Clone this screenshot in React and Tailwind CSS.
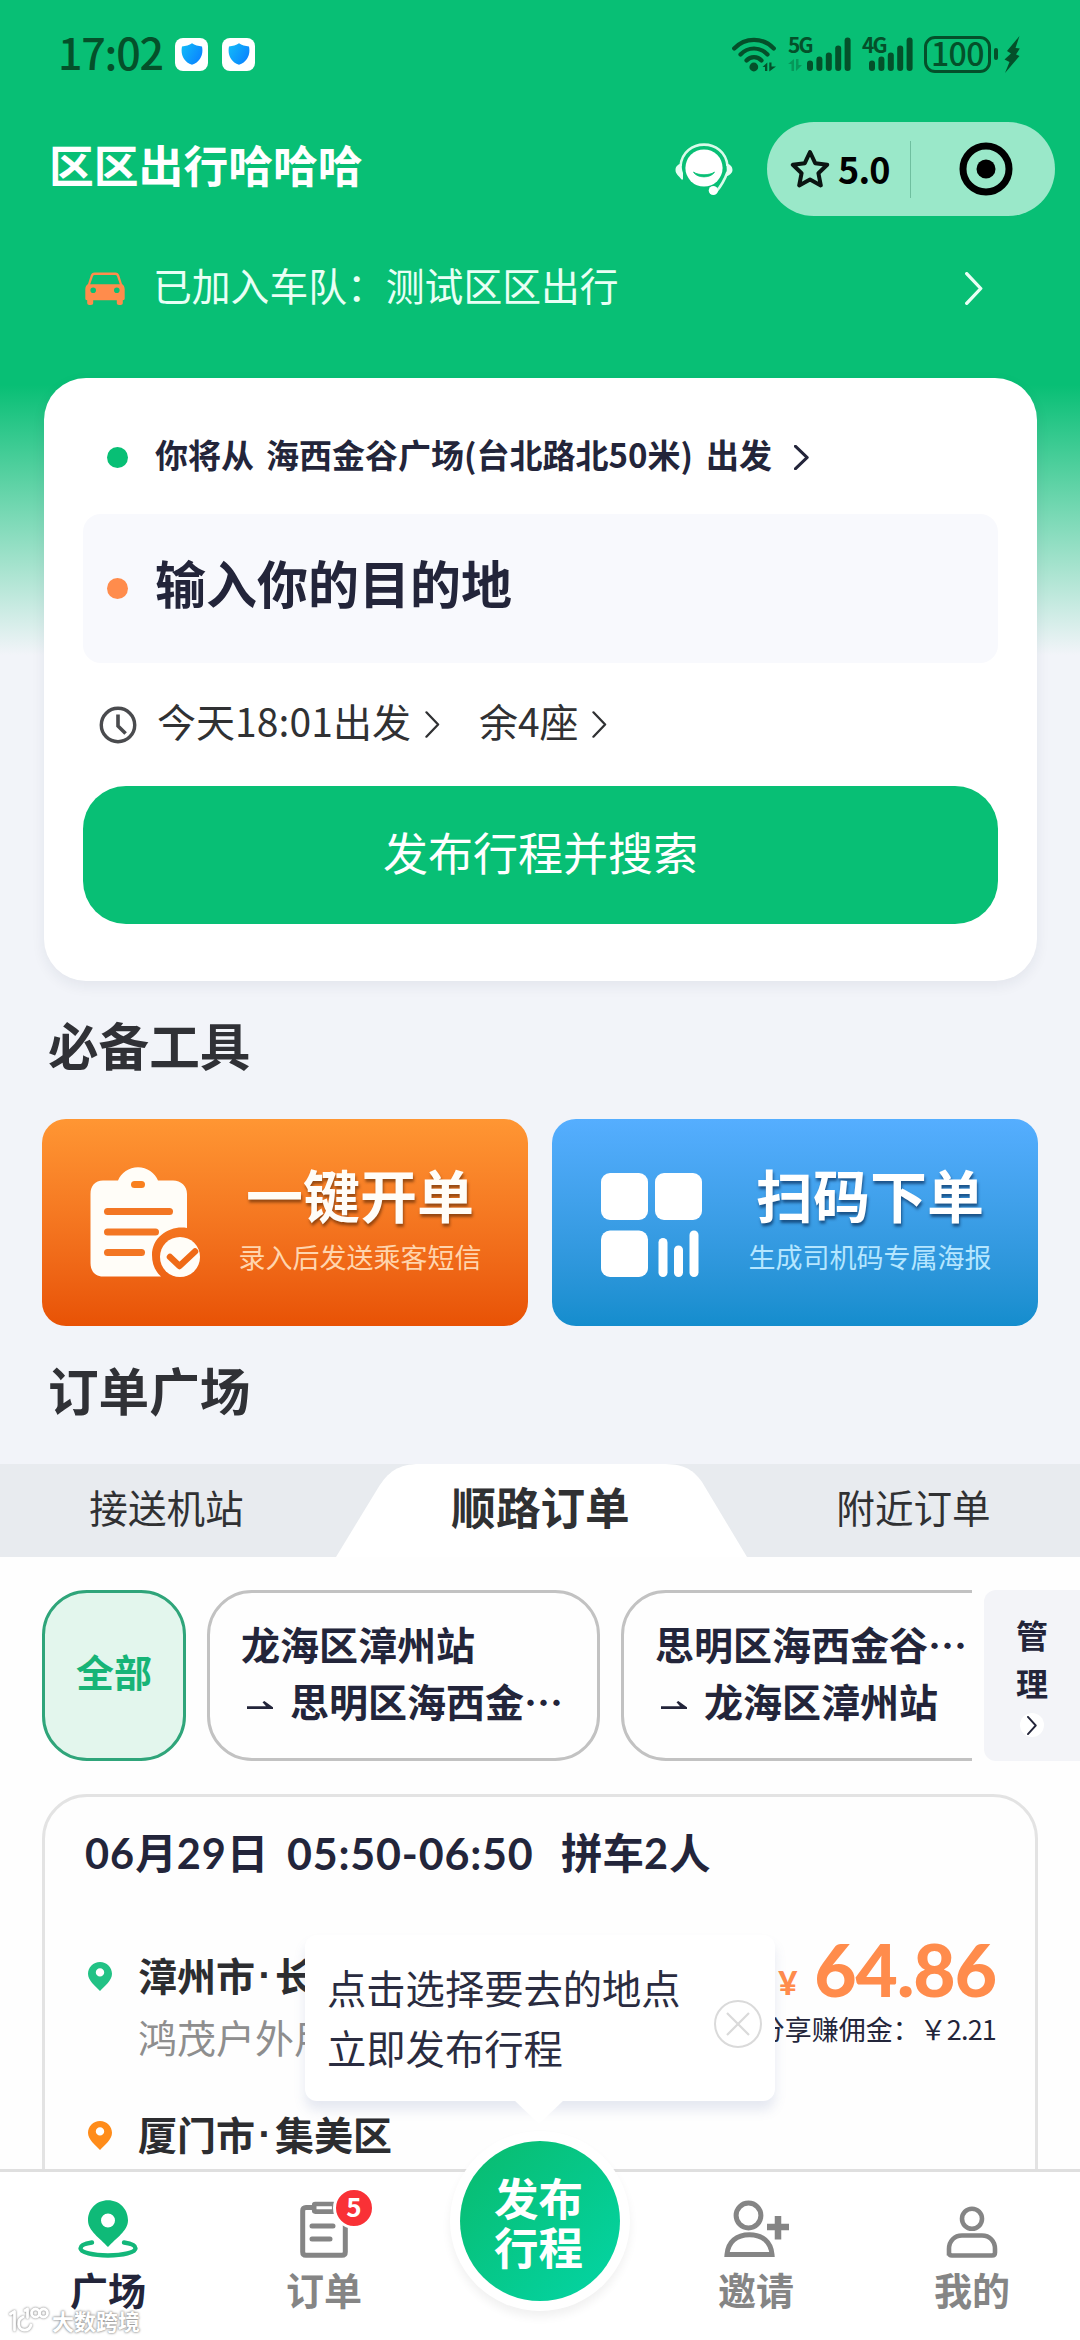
import React from "react";

const Chevron = ({ className, strokeWidth = 3 }) => (
  <svg viewBox="0 0 16 30" fill="none" preserveAspectRatio="none" className={className}>
    <path
      d="M1.5 1.5 L14 15 L1.5 28.5"
      stroke="currentColor"
      strokeWidth={strokeWidth}
      strokeLinecap="round"
      strokeLinejoin="round"
    />
  </svg>
);

const ShieldBadge = () => (
  <div className="flex h-[33px] w-[33px] items-center justify-center rounded-[8px] bg-white">
    <svg viewBox="0 0 22 22" className="h-[22px] w-[22px]">
      <defs>
        <linearGradient id="shield" x1="0" y1="0" x2="1" y2="0.6">
          <stop offset="0" stopColor="#12bdf8" />
          <stop offset="1" stopColor="#0a84ff" />
        </linearGradient>
      </defs>
      <path
        d="M11 0.3 C13.5 2 17.5 3.2 21 3.6 C22.6 11 19.6 18.6 11 21.8 C2.4 18.6 -0.6 11 1 3.6 C4.5 3.2 8.5 2 11 0.3 Z"
        fill="url(#shield)"
      />
    </svg>
  </div>
);

const WifiIcon = () => (
  <svg viewBox="0 0 44 35" fill="none" className="h-[35px] w-[44px]">
    <g stroke="#04502a" strokeWidth="4.2" strokeLinecap="round">
      <path d="M2.2 11.5 C13 0 31 0 41.8 11.5" />
      <path d="M8.5 17.5 C16 9.5 28 9.5 35.5 17.5" />
      <path d="M14.5 23.5 C18.5 19 25.5 19 29.5 23.5" />
    </g>
    <circle cx="21.8" cy="30" r="4.4" fill="#04502a" />
    <path d="M30.5 30 L35.3 25.5 V34 H33 V30 Z M37.3 25.5 H39.5 V29.5 H44 L37.3 34.5 Z" fill="#04502a" />
  </svg>
);

const SignalBars = ({ className }) => (
  <svg viewBox="0 0 44 34" className={className}>
    <g fill="#04502a">
      <rect x="0" y="23.5" width="6" height="10.5" rx="3" />
      <rect x="9.4" y="19.5" width="6" height="14.5" rx="3" />
      <rect x="18.8" y="15.5" width="6" height="18.5" rx="3" />
      <rect x="28.2" y="8.5" width="6" height="25.5" rx="3" />
      <rect x="37.6" y="0.5" width="6" height="33.5" rx="3" />
    </g>
  </svg>
);

const StatusBar = () => (
  <div className="flex h-[108px] items-center pl-[58px] pr-[60px] text-[#04502a]">
    <div className="w-[117px] pb-[5px] text-[43px] leading-none font-medium tracking-[-1.2px]">17:02</div>
    <div className="flex gap-[14px]">
      <ShieldBadge />
      <ShieldBadge />
    </div>
    <div className="ml-auto flex items-center">
      <WifiIcon />
      <div className="ml-[12px] flex h-[35px] w-[63px] items-start">
        <div className="w-[19px]">
          <div className="w-[26px] text-[21px] leading-[15px] font-bold tracking-[-1.8px]">5G</div>
          <svg viewBox="0 0 14 12" className="mt-[7px] h-[12px] w-[14px] opacity-35">
            <path d="M0 5 L6 0 V12 H3.5 V5 Z M8 0 H10.5 V6 H14 L8 12 Z" fill="#04502a" />
          </svg>
        </div>
        <SignalBars className="h-[34px] w-[44px]" />
      </div>
      <div className="ml-[11px] flex h-[35px] w-[51px] items-start">
        <div className="w-[7px]">
          <div className="w-[26px] text-[21px] leading-[15px] font-bold tracking-[-1.8px]">4G</div>
        </div>
        <SignalBars className="h-[34px] w-[44px]" />
      </div>
      <div className="ml-[11px] flex h-[37px] w-[67px] items-center justify-center rounded-[11px] border-[3px] border-[#04502a] pb-[5px] text-[32px] leading-none font-medium tracking-[-0.5px]">
        100
      </div>
      <div className="ml-[3px] h-[12px] w-[4px] rounded-[2px] bg-[#04502a]" />
      <svg viewBox="0 0 16 37" className="ml-[6px] h-[37px] w-[16px]">
        <path d="M15.5 0 L3 15 L7 17.5 L0.5 23.5 L5.5 26 L1 37 L15.5 20 L12 18.5 L15.8 12.5 L11.5 12 Z" fill="#04502a" />
      </svg>
    </div>
  </div>
);

const ServiceIcon = () => (
  <svg viewBox="0 0 58 54" fill="none" className="h-[54px] w-[58px]">
    <circle cx="29" cy="26" r="18.6" fill="#fff" />
    <path d="M18.5 30 C22 36.5 36 36.5 39.5 30 C35 33.6 23 33.6 18.5 30 Z" fill="#08bf75" stroke="#08bf75" strokeWidth="0.8" strokeLinejoin="round" />
    <path d="M5.5 24 C8 -4.5 50 -4.5 52.5 24 M52.5 30 C50 37 47 43 41 50" stroke="#d9fbea" strokeWidth="2.6" />
    <path d="M7 21.5 C3 22 0.5 24.5 0.5 28 C0.5 32 4 34 6.5 37.5 H8 V31 C6.8 28 6.5 24 7 21.5 Z" fill="#e6fdf3" />
    <path d="M51 21.5 C55 22 57.5 24.5 57.5 28 C57.5 31 54.5 33.5 51 34.5 C52 30 52 25 51 21.5 Z" fill="#e6fdf3" />
    <circle cx="38.3" cy="48.5" r="4.6" fill="#fff" />
  </svg>
);

const TitleBar = () => (
  <div className="mt-[14px] flex h-[94px] items-center pl-[49px] pr-[25px]">
    <h1 className="pb-[9px] text-[44.8px] leading-none font-bold text-white">区区出行哈哈哈</h1>
    <div className="mr-[34px] ml-auto pb-[1px]">
      <ServiceIcon />
    </div>
    <div className="flex h-[94px] w-[288px] items-center rounded-full bg-[#9ae8c9] pl-[23px] text-black">
      <svg viewBox="0 0 40 40" fill="none" className="h-[40px] w-[40px]">
        <path
          d="M20 3 L25.2 14.2 L37.2 15.8 L28.4 24.2 L30.8 36.4 L20 30.6 L9.2 36.4 L11.6 24.2 L2.8 15.8 L14.8 14.2 Z"
          stroke="#0b1512"
          strokeWidth="4"
          strokeLinejoin="round"
        />
      </svg>
      <span className="ml-[8px] w-[64px] pb-[2px] text-[36px] leading-none font-bold tracking-[-0.8px]">5.0</span>
      <div className="ml-[8px] h-[57px] w-px bg-[#6fbf9f]" />
      <svg viewBox="0 0 54 54" className="ml-[48px] h-[54px] w-[54px]">
        <circle cx="27" cy="27" r="23" fill="none" stroke="#000" strokeWidth="7" />
        <circle cx="27" cy="27" r="9.5" fill="#000" />
      </svg>
    </div>
  </div>
);

const TeamRow = () => (
  <div className="flex h-[144px] items-center pr-[97px] pl-[85px] text-[#e9fff5]">
    <svg viewBox="0 0 40 33" className="h-[33px] w-[40px]">
      <path
        fillRule="evenodd"
        clipRule="evenodd"
        fill="#ff8c4c"
        d="M9.5 0.5 H30.5 C32.5 0.5 33.6 1.5 34.3 3.4 L37 12 C38.8 13.2 39.7 15 39.7 17.3 V26.5 C39.7 27.6 39 28.2 37.8 28.2 V31 C37.8 32.2 37 33 35.6 33 H34 C32.6 33 31.8 32.2 31.8 31 V28.2 H8.2 V31 C8.2 32.2 7.4 33 6 33 H4.4 C3 33 2.2 32.2 2.2 31 V28.2 C1 28.2 0.3 27.6 0.3 26.5 V17.3 C0.3 15 1.2 13.2 3 12 L5.7 3.4 C6.4 1.5 7.5 0.5 9.5 0.5 Z M9.6 3 C8.8 3 8.3 3.4 8 4.2 L5.2 12.3 H34.8 L32 4.2 C31.7 3.4 31.2 3 30.4 3 Z M8.2 15.4 A2.8 2.8 0 1 0 8.2 21 A2.8 2.8 0 1 0 8.2 15.4 Z M31.8 15.4 A2.8 2.8 0 1 0 31.8 21 A2.8 2.8 0 1 0 31.8 15.4 Z"
      />
    </svg>
    <span className="ml-[28px] pb-[8px] text-[38.8px] leading-none">已加入车队：测试区区出行</span>
    <Chevron className="ml-auto h-[33px] w-[18px]" />
  </div>
);

const TripCard = () => (
  <div className="mx-[44px] mt-[18px] h-[603px] w-[993px] rounded-[42px] bg-white px-[39px] pt-[32px] shadow-[0_5px_14px_rgba(30,40,70,0.07)]">
    <div className="mb-[10px] flex h-[94px] items-center pl-[24px] text-[#23253a]">
      <div className="h-[21px] w-[21px] rounded-full bg-[#08bf75]" />
      <span className="ml-[27px] pb-[6px] text-[33px] leading-none font-bold">
        你将从<span className="inline-block w-[12px]" />
        海西金谷广场(台北路北50米)
        <span className="inline-block w-[13px]" />
        出发
      </span>
      <Chevron className="ml-[22px] h-[25px] w-[15px]" strokeWidth={3.4} />
    </div>
    <div className="flex h-[149px] items-center rounded-[18px] bg-[#f8f9fd] pl-[24px]">
      <div className="h-[21px] w-[21px] rounded-full bg-[#ff8c4c]" />
      <span className="ml-[27px] pb-[12px] text-[51px] leading-none font-bold text-[#23253a]">输入你的目的地</span>
    </div>
    <div className="flex h-[123px] items-center pl-[16px] text-[#303133]">
      <svg viewBox="0 0 40 40" fill="none" className="h-[40px] w-[38px]">
        <circle cx="20" cy="20" r="17.6" stroke="#4a4b4e" strokeWidth="3.6" />
        <path d="M20 9 V21 L28 29" stroke="#4a4b4e" strokeWidth="3.8" />
      </svg>
      <span className="ml-[20px] pb-[9px] text-[39px] leading-none">
        今天<span className="tracking-[0.1px]">18:01</span>出发
      </span>
      <Chevron className="ml-[14px] h-[27px] w-[15px]" strokeWidth={2.4} />
      <span className="ml-[39px] pb-[9px] text-[39px] leading-none">余4座</span>
      <Chevron className="ml-[13px] h-[27px] w-[15px]" strokeWidth={2.4} />
    </div>
    <button className="flex h-[138px] w-full items-center justify-center rounded-[43px] bg-[#08bf75] pb-[7px] text-[45px] leading-none text-white">
      发布行程并搜索
    </button>
  </div>
);

const SectionTitle = ({ children }) => (
  <h2 className="flex h-[138px] items-center pb-[11px] pl-[48px] text-[50.6px] leading-none font-bold text-[#303136]">
    {children}
  </h2>
);

const ClipboardIcon = () => (
  <svg viewBox="0 0 110 110" className="h-[110px] w-[110px]">
    <path
      fill="#fffdf8"
      d="M13 13.5 H28 C31 6 39 0.3 48 0.3 C57 0.3 65 6 68 13.5 H83 C91 13.5 97 19 97 27 V61 C81 58 62 69 62 88 C62 97 65 104 71 109.5 H13 C5 109.5 0.5 104 0.5 96 V27 C0.5 19 5 13.5 13 13.5 Z"
    />
    <rect x="41" y="14" width="14" height="7" rx="3.5" fill="#f9801f" />
    <g fill="#f37623">
      <rect x="14" y="41" width="69" height="7" rx="3.5" />
      <rect x="14" y="61.5" width="55" height="7" rx="3.5" />
      <rect x="14" y="82" width="41" height="7" rx="3.5" />
    </g>
    <circle cx="90" cy="90" r="20" fill="#fffdf8" />
    <path d="M80 90 L89.5 99 L105 84.5" fill="none" stroke="#ef6a17" strokeWidth="6.5" strokeLinecap="round" strokeLinejoin="round" />
  </svg>
);

const ScanIcon = () => (
  <svg viewBox="0 0 101 104" fill="#fff" className="h-[104px] w-[101px]">
    <rect x="0" y="0" width="47" height="47" rx="9" />
    <rect x="54" y="0" width="47" height="47" rx="9" />
    <rect x="0" y="57.5" width="47" height="46.5" rx="9" />
    <rect x="57.5" y="65" width="9" height="39" rx="4.5" />
    <rect x="73" y="72.5" width="9" height="31.5" rx="4.5" />
    <rect x="88.5" y="57.5" width="9" height="46.5" rx="4.5" />
  </svg>
);

const Tools = () => (
  <div className="flex h-[207px] gap-[24px] px-[42px]">
    <div className="flex w-[486px] rounded-[24px] bg-linear-to-b from-[#ff9633] to-[#e85205]">
      <div className="mt-[48px] ml-[48px]">
        <ClipboardIcon />
      </div>
      <div className="mt-[45px] ml-[38px] w-[244px] text-center">
        <div className="text-[57px] leading-[58px] font-bold text-[#fffdf8] [text-shadow:1px_3px_3px_rgba(70,30,0,0.55)]">一键开单</div>
        <div className="mt-[20px] text-[27px] leading-[30px] text-[#ffd5ae]">录入后发送乘客短信</div>
      </div>
    </div>
    <div className="flex w-[486px] rounded-[24px] bg-linear-to-b from-[#55aeff] to-[#148dcd]">
      <div className="mt-[54px] ml-[49px]">
        <ScanIcon />
      </div>
      <div className="mt-[45px] ml-[46px] w-[244px] text-center">
        <div className="text-[57px] leading-[58px] font-bold text-white [text-shadow:1px_3px_3px_rgba(0,30,70,0.6)]">扫码下单</div>
        <div className="mt-[20px] text-[27px] leading-[30px] text-[#b5e6ff]">生成司机码专属海报</div>
      </div>
    </div>
  </div>
);

const OrderTabs = () => (
  <div className="flex h-[93px] bg-[#e8ebef] text-[#303133]">
    <div className="flex w-[336px] items-center justify-center pr-[3px] pb-[8px] text-[38.6px] leading-none">接送机站</div>
    <div className="relative flex w-[411px] items-center justify-center pr-[2px] pb-[8px]">
      <svg viewBox="0 0 411 93" className="absolute inset-0 h-[93px] w-[411px]">
        <path d="M0 93 L42 24 C52 8 62 0 84 0 H326 C346 0 356 4 366 18 L411 93 Z" fill="#fff" />
      </svg>
      <span className="relative text-[44.6px] leading-none font-bold">顺路订单</span>
    </div>
    <div className="flex w-[333px] items-center justify-center pb-[8px] text-[38.6px] leading-none">附近订单</div>
  </div>
);

const Harpoon = () => (
  <svg viewBox="0 0 26 9" className="mt-[11px] h-[9px] w-[26px]">
    <path d="M0 5.3 H19 L15.5 1.2 L17.3 0 L26 6.2 V8 H0 Z" fill="#23253a" />
  </svg>
);

const RouteChip = ({ from, to }) => (
  <div className="h-[171px] w-[393px] shrink-0 rounded-[45px] border-[3px] border-[#c2c2c2] pt-[25px] pl-[31px] text-[39px] font-bold whitespace-nowrap text-[#23253a]">
    <div className="leading-[50px]">{from}</div>
    <div className="mt-[7px] flex items-center leading-[50px]">
      <div className="ml-[6px] w-[43px]">
        <Harpoon />
      </div>
      {to}
    </div>
  </div>
);

const RouteFilter = () => (
  <div className="flex justify-between pt-[33px] pl-[42px]">
    <div className="flex w-[930px] gap-[21px] overflow-hidden">
      <div className="flex h-[171px] w-[144px] shrink-0 items-center justify-center rounded-[45px] border-[3px] border-[#2fa57a] bg-[#e3f6ed] pb-[9px] text-[38px] leading-none font-bold text-[#17b477]">
        全部
      </div>
      <RouteChip from="龙海区漳州站" to="思明区海西金…" />
      <RouteChip from="思明区海西金谷…" to="龙海区漳州站" />
    </div>
    <div className="flex h-[171px] w-[96px] flex-col items-center rounded-l-[12px] bg-[#f3f4f8] pt-[20px] text-[32px] leading-[48px] font-bold text-[#23253a]">
      <span>管</span>
      <span>理</span>
      <div className="mt-[7px] flex h-[24px] w-[24px] items-center justify-center rounded-full bg-white">
        <Chevron className="h-[19px] w-[10px]" strokeWidth={3} />
      </div>
    </div>
  </div>
);

const PinIcon = ({ className }) => (
  <svg viewBox="0 0 24 29" className={className}>
    <path
      fillRule="evenodd"
      fill="currentColor"
      d="M12 0 C18.8 0 24 5.2 24 11.8 C24 18.8 17 23.5 12 29 C7 23.5 0 18.8 0 11.8 C0 5.2 5.2 0 12 0 Z M12 6.2 A4.2 4.2 0 1 0 12 14.6 A4.2 4.2 0 1 0 12 6.2 Z"
    />
  </svg>
);

const Place = ({ city, area }) => (
  <span className="flex text-[39px] leading-none font-bold whitespace-nowrap text-[#2c2d30]">
    {city}
    <span className="w-[20px] text-center font-['Liberation_Sans']">·</span>
    {area}
  </span>
);

const OrderCard = () => (
  <div className="mx-[42px] mt-[33px] h-[520px] rounded-[45px] border-[3px] border-[#e3e3e3] pr-[39px] pl-[40px]">
    <div className="flex h-[112px] items-center text-[41.5px] leading-none font-bold text-[#23253a]">
      <span className="w-[202px]">
        <span className="font-['Lato'] tracking-[1px]">06</span>月<span className="font-['Lato'] tracking-[1px]">29</span>日
      </span>
      <span className="w-[274px] font-['Lato'] text-[43px] tracking-[0.8px]">05:50-06:50</span>
      <span>
        拼车<span className="font-['Lato'] tracking-[1px]">2</span>人
      </span>
    </div>
    <div className="mt-[34px] flex justify-between">
      <div>
        <div className="flex h-[62px] items-center">
          <PinIcon className="mt-[5px] mr-[26px] ml-[3px] h-[29px] w-[24px] text-[#22c285]" />
          <Place city="漳州市" area="长" />
        </div>
        <div className="flex h-[62px] items-center pl-[53px] text-[39px] leading-none text-[#8e8e8e]">鸿茂户外用</div>
        <div className="mt-[35px] flex h-[62px] items-center">
          <PinIcon className="mt-[5px] mr-[26px] ml-[3px] h-[29px] w-[24px] text-[#ff8c1a]" />
          <Place city="厦门市" area="集美区" />
        </div>
      </div>
      <div className="text-right">
        <div className="h-[62px] font-['Lato'] leading-[52px] font-black text-[#ff8c4c]">
          <span className="relative top-[-2px] mr-[17px] text-[33px]">¥</span>
          <span className="text-[73px] tracking-[-1px]">64.86</span>
        </div>
        <div className="mt-[9px] text-[27px] leading-[30px] text-[#23253a]">
          分享赚佣金：￥<span className="tracking-[-0.8px]">2.21</span>
        </div>
      </div>
    </div>
  </div>
);

// Bubble over the publish button
const PublishTip = () => (
  <div className="absolute top-[1935px] left-[305px] h-[166px] w-[470px]">
    <div className="flex h-full items-center justify-between rounded-[12px] bg-white pr-[13px] pb-[3px] pl-[22px] shadow-[0_9px_12px_rgba(90,110,170,0.15)]">
      <div className="text-[39.3px] leading-[60px] text-[#2a2c40]">
        <div>点击选择要去的地点</div>
        <div>立即发布行程</div>
      </div>
      <svg viewBox="0 0 48 48" fill="none" className="mt-[15px] h-[48px] w-[48px]">
        <circle cx="24" cy="24" r="23" stroke="#dadada" strokeWidth="2" />
        <path d="M13 13 L35 35 M35 13 L13 35" stroke="#dadada" strokeWidth="2.2" />
      </svg>
    </div>
    <svg viewBox="0 0 50 24" className="absolute top-[165px] left-[209px] h-[24px] w-[50px]">
      <path d="M0 0 H50 L25 24 Z" fill="#fff" />
    </svg>
  </div>
);

const PlazaIcon = () => (
  <svg viewBox="0 0 60 58" fill="none" className="h-[58px] w-[60px]">
    <path d="M14 42.5 C7 43.5 2.5 45.5 2.5 48.3 C2.5 52.4 14.8 55.5 30 55.5 C45.2 55.5 57.5 52.4 57.5 48.3 C57.5 45.5 53 43.5 46 42.5" stroke="#13b77a" strokeWidth="4.4" strokeLinecap="round" />
    <path
      fillRule="evenodd"
      fill="#0fba78"
      d="M30 0.3 C41.4 0.3 50 9 50 20.2 C50 31 38 38 30 47 C22 38 10 31 10 20.2 C10 9 18.6 0.3 30 0.3 Z M30 13.5 A7 7 0 1 0 30 27.5 A7 7 0 1 0 30 13.5 Z"
    />
  </svg>
);

const OrdersIcon = () => (
  <svg viewBox="0 0 48 57" fill="none" stroke="#858585" className="h-[57px] w-[48px]">
    <path d="M12 6.5 H6 C3.8 6.5 2.7 7.6 2.7 9.8 V51 C2.7 53.2 3.8 54.3 6 54.3 H42 C44.2 54.3 45.3 53.2 45.3 51 V9.8 C45.3 7.6 44.2 6.5 42 6.5 H36" strokeWidth="5" />
    <rect x="14.2" y="3" width="20" height="7.6" rx="1" strokeWidth="4.6" />
    <path d="M12 25 H33 M12 38 H30" strokeWidth="5" strokeLinecap="round" />
  </svg>
);

const InviteIcon = () => (
  <svg viewBox="0 0 65 58" fill="none" stroke="#858585" className="h-[58px] w-[65px]">
    <circle cx="24.5" cy="15.5" r="12.4" strokeWidth="5" />
    <path d="M3 54.5 C4 42 12.5 34.8 25.5 34.8 C38.5 34.8 47 42 48 54.5 Z" strokeWidth="5" />
    <path d="M43 27 H65 M54 16 V39.5" strokeWidth="6.5" />
  </svg>
);

const MineIcon = () => (
  <svg viewBox="0 0 52 52" fill="none" stroke="#858585" className="h-[52px] w-[52px]">
    <circle cx="26" cy="12.8" r="10" strokeWidth="4.6" />
    <path d="M3 49.5 V43 C3 35 8.5 29.5 16 29.5 H36 C43.5 29.5 49 35 49 43 V46.5 C49 48.5 48 49.5 46 49.5 H6 C4 49.5 3 48.5 3 46.5" strokeWidth="4.6" />
  </svg>
);

const NavItem = ({ icon, label, active, badge }) => (
  <div className="flex w-[216px] flex-col items-center">
    <div className="relative flex h-[86px] items-end">
      {icon}
      {badge && (
        <div className="absolute top-[15px] left-[33px] flex h-[42px] w-[42px] items-center justify-center rounded-full border-[3px] border-white bg-[#f93136] pb-[4px] text-[26px] leading-none font-bold text-white">
          {badge}
        </div>
      )}
    </div>
    <span className={`mt-[12px] text-[38px] leading-[38px] font-bold ${active ? "text-[#23253a]" : "text-[#858585]"}`}>
      {label}
    </span>
  </div>
);

const BottomNav = () => (
  <div className="relative flex h-[171px] shrink-0 border-t-[3px] border-[#dfdfdf] bg-white">
    <NavItem icon={<PlazaIcon />} label="广场" active />
    <NavItem icon={<OrdersIcon />} label="订单" badge="5" />
    <div className="w-[216px]" />
    <NavItem icon={<InviteIcon />} label="邀请" />
    <NavItem icon={<MineIcon />} label="我的" />
    <button className="absolute top-[-41px] left-[450px] h-[180px] w-[180px] rounded-full bg-white p-[10px] shadow-[0_6px_10px_rgba(0,0,0,0.06)]">
      <div className="flex h-full w-full flex-col items-center justify-center rounded-full bg-linear-to-br from-[#0aba6c] to-[#04d6a6] pr-[3px] text-[44.5px] leading-[49px] font-bold text-white">
        <span>发布</span>
        <span>行程</span>
      </div>
    </button>
    <div className="absolute bottom-[7px] left-[9px] flex items-center text-[22px] leading-none font-bold text-white [text-shadow:0_0_2px_#888,0_0_3px_#999]">
      <svg viewBox="0 0 40 26" fill="none" className="mr-[3px] h-[26px] w-[40px] drop-shadow-[0_0_1px_#777]">
        <g stroke="#fff" strokeWidth="2.8" strokeLinecap="round" strokeLinejoin="round">
          <path d="M1.5 7 L5.5 4.5 V23" />
          <path d="M14 10 C7.5 12.5 8.5 22.5 15 23 C18.5 23.3 21 21.5 22 18" />
          <path d="M16 3.5 L18.5 2 V10.5" />
          <circle cx="26.5" cy="6" r="4" />
          <circle cx="34.5" cy="6" r="4" />
        </g>
      </svg>
      大数跨境
    </div>
  </div>
);

const App = () => (
  <div
    lang="zh-CN"
    className="relative flex h-[2340px] w-[1080px] flex-col overflow-hidden bg-[linear-gradient(to_bottom,#08bf75_0px,#08bf75_385px,#f2f4f9_655px)] font-['Noto_Sans_CJK_SC',sans-serif]"
  >
    <div className="min-h-0 flex-1 overflow-hidden">
      <StatusBar />
      <TitleBar />
      <TeamRow />
      <TripCard />
      <SectionTitle>必备工具</SectionTitle>
      <Tools />
      <SectionTitle>订单广场</SectionTitle>
      <OrderTabs />
      <div className="bg-[#fefefe]">
        <RouteFilter />
        <OrderCard />
      </div>
    </div>
    <PublishTip />
    <BottomNav />
  </div>
);

export default App;
